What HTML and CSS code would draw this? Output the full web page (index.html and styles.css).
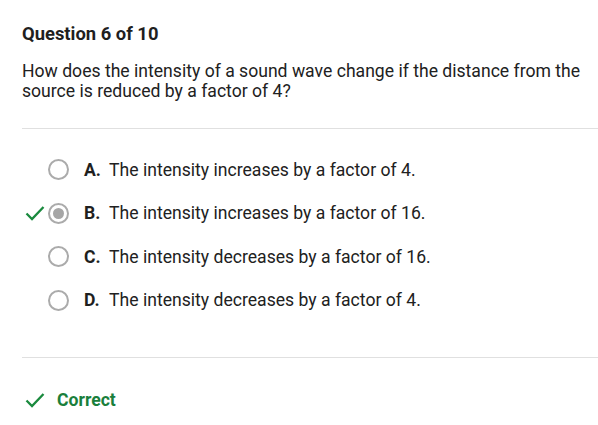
FILE: index.html
```html
<!DOCTYPE html>
<html>
<head>
<meta charset="utf-8">
<link rel="stylesheet" href="styles.css">
</head>
<body>
<div class="quiz">
  <h1 class="title">Question 6 of 10</h1>
  <p class="question">How does the intensity of a sound wave change if the distance from the source is reduced by a factor of 4?</p>
  <div class="divider"></div>
  <ul class="options">
    <li class="option">
      <span class="mark"></span>
      <span class="radio"></span>
      <span class="letter">A.</span>
      <span class="text">The intensity increases by a factor of 4.</span>
    </li>
    <li class="option">
      <span class="mark"><svg width="20" height="16" viewBox="0 0 20 16"><path d="M1.5 8.5 L7 14 L18.5 2" fill="none" stroke="#1a8a3e" stroke-width="2.3"/></svg></span>
      <span class="radio selected"></span>
      <span class="letter">B.</span>
      <span class="text">The intensity increases by a factor of 16.</span>
    </li>
    <li class="option">
      <span class="mark"></span>
      <span class="radio"></span>
      <span class="letter">C.</span>
      <span class="text">The intensity decreases by a factor of 16.</span>
    </li>
    <li class="option">
      <span class="mark"></span>
      <span class="radio"></span>
      <span class="letter">D.</span>
      <span class="text">The intensity decreases by a factor of 4.</span>
    </li>
  </ul>
  <div class="divider lower"></div>
  <div class="result">
    <svg class="result-icon" width="20" height="16" viewBox="0 0 20 16"><path d="M1.5 8.5 L7 14 L18.5 2" fill="none" stroke="#1a8a3e" stroke-width="2.3"/></svg>
    <span class="result-text">Correct</span>
  </div>
</div>
</body>
</html>
```
FILE: styles.css
```css
html, body {
  margin: 0;
  padding: 0;
  background: #ffffff;
}
body {
  font-family: Roboto, "Liberation Sans", Arial, sans-serif;
  color: #212121;
}
.quiz {
  padding: 23px 0 0 22px;
  display: flex;
  flex-direction: column;
}
.title {
  margin: 0;
  font-size: 18.4px;
  line-height: 22px;
  font-weight: 700;
  color: #1f1f1f;
}
.question {
  margin: 17px 8px 0 0;
  font-size: 17.6px;
  line-height: 19.6px;
  color: #212121;
}
.divider {
  margin-top: 27px;
  height: 1px;
  background: #e0e0e0;
}
.options {
  list-style: none;
  margin: 19px 0 0 0;
  padding: 0;
  display: flex;
  flex-direction: column;
}
.option {
  height: 43.5px;
  display: flex;
  align-items: center;
  font-size: 17.6px;
}
.mark {
  width: 20px;
  height: 16px;
  margin-left: 3px;
  display: flex;
  align-items: center;
}
.radio {
  box-sizing: border-box;
  width: 21px;
  height: 21px;
  margin-left: 3px;
  border: 2px solid #ababab;
  border-radius: 50%;
  display: flex;
  align-items: center;
  justify-content: center;
}
.radio.selected::after {
  content: "";
  width: 11px;
  height: 11px;
  border-radius: 50%;
  background: #a6a6a6;
}
.letter {
  margin-left: 15px;
  width: 25px;
  font-weight: 700;
  color: #1f1f1f;
}
.text {
  color: #212121;
}
.divider.lower {
  margin-top: 35px;
}
.result {
  height: 82px;
  display: flex;
  align-items: center;
  padding-top: 2px;
  box-sizing: border-box;
}
.result-icon {
  margin-left: 3px;
}
.result-text {
  margin-left: 12px;
  font-size: 17.6px;
  font-weight: 700;
  color: #1a7f3c;
}
```
